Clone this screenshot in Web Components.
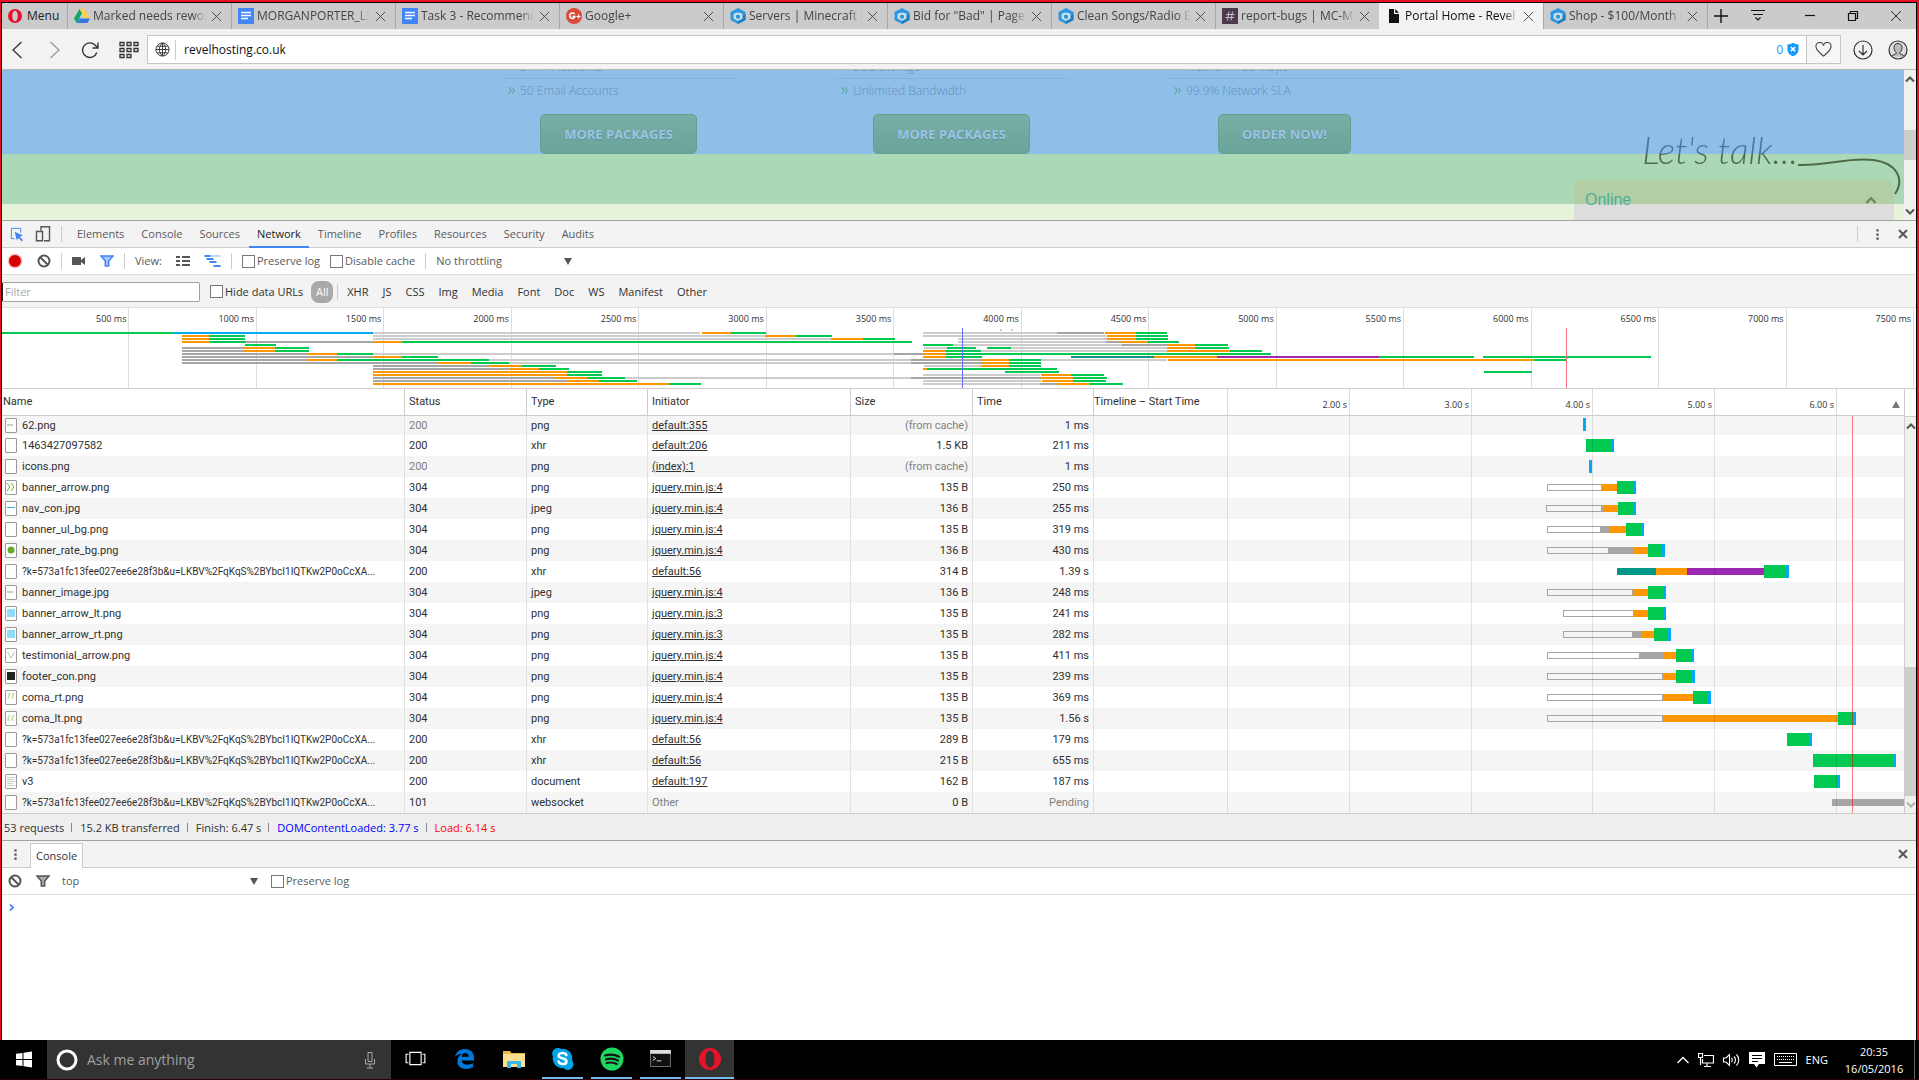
<!DOCTYPE html>
<html lang="en">
<head>
<meta charset="utf-8">
<title>Portal Home - Revel Hosting</title>
<style>
  html, body {
    margin: 0;
    height: 100%;
  }
  body {
    display: flex;
    flex-direction: column;
    overflow: hidden;
    background: #000;
    color: #303030;
    font: 11px/16px "Open Sans", "Noto Sans", sans-serif;
  }
</style>
</head>
<body>
<browser-window>
  <tab-strip>
    <browser-tab icon="drive">Marked needs rework</browser-tab>
    <browser-tab icon="docs">MORGANPORTER_L3_</browser-tab>
    <browser-tab icon="docs">Task 3 - Recommendations</browser-tab>
    <browser-tab icon="gplus">Google+</browser-tab>
    <browser-tab icon="cube">Servers | Minecraft Market</browser-tab>
    <browser-tab icon="cube">Bid for "Bad" | Page 2</browser-tab>
    <browser-tab icon="cube">Clean Songs/Radio Edits</browser-tab>
    <browser-tab icon="slack">report-bugs | MC-Market</browser-tab>
    <browser-tab icon="page" active>Portal Home - Revel Hosting</browser-tab>
    <browser-tab icon="cube">Shop - $100/Month GFX</browser-tab>
  </tab-strip>
  <address-bar></address-bar>
  <page-view>
    <package-card action="MORE PACKAGES"><li>5 FTP Accounts</li><li>50 Email Accounts</li></package-card>
    <package-card action="MORE PACKAGES"><li>2GB Storage</li><li>Unlimited Bandwidth</li></package-card>
    <package-card action="ORDER NOW!"><li>Network 100 Mbps</li><li>99.9% Network SLA</li></package-card>
    <chat-widget slot="chat">Online</chat-widget>
  </page-view>
  <devtools-tabs></devtools-tabs>
  <network-toolbar></network-toolbar>
  <filter-bar></filter-bar>
  <network-overview></network-overview>
  <network-table></network-table>
  <network-summary></network-summary>
  <console-drawer></console-drawer>
</browser-window>
<task-bar></task-bar>

<script>
const ICONS = {
  opera: ['0 0 16 16', '<path fill="#e8112d" fill-rule="evenodd" d="M8 0a8 8 0 1 0 0 16A8 8 0 0 0 8 0zm0 2c2 0 3.100 2.700 3.100 6S10 14 8 14 4.900 11.300 4.900 8 6 2 8 2z"/>'],
  drive: ['0 0 16 16', '<path fill="#ffcf48" d="M5.500 1h5L16 10.500h-5z"/><path fill="#11a861" d="M5.500 1 0 10.500 2.600 15 8 5.500z"/><path fill="#3777e3" d="M5.300 10.500H16L13.400 15H2.600z"/>'],
  docs: ['0 0 16 16', '<path fill="#4285f4" d="M0 0h16v16H0z"/><path stroke="#fff" stroke-width="1.300" d="M3 4.500h10M3 7.500h10M3 10.500h7"/>'],
  gplus: ['0 0 16 16', '<circle cx="8" cy="8" r="8" fill="#db4a39"/><path fill="none" stroke="#fff" stroke-width="1.500" d="M8.500 6A2.700 2.700 0 1 0 9 8.500H6.300"/><path stroke="#fff" stroke-width="1.200" d="M12.500 6.500v4M10.500 8.500h4"/>'],
  cube: ['0 0 16 16', '<path fill="#2f97dd" d="m8 0 7.500 4v8L8 16 .500 12V4z"/><path fill="#1c7fc4" d="m8 16 7.500-4V6L8 10z"/><path fill="#cbe0ee" d="m8 4 4.500 2v4.500L8 13l-4.500-2.500V6z"/><path fill="#2f97dd" d="m8 6.500 2 1v2.300L8 11 6 9.800V7.500zM7.300 2h1.400v3H7.300z"/>'],
  slack: ['0 0 16 16', '<path fill="#4d394b" d="M0 0h16v16H0z"/><path stroke="#c9bcc8" d="m7 3.500-1.500 9M10.500 3.500 9 12.500M4 6.500h8.500M3.500 9.500H12"/>'],
  page: ['0 0 16 16', '<path fill="#111" d="M3 1h5v5h5v9H3zM9.200 1 13 4.800H9.200z"/>'],
  close: ['0 0 12 12', '<path fill="none" stroke="currentColor" d="m1 1 10 10M11 1 1 11"/>'],
  bold_close: ['0 0 12 12', '<path fill="none" stroke="#555" stroke-width="2" d="m2 2 8 8M10 2l-8 8"/>'],
  plus: ['0 0 14 14', '<path stroke="#111" stroke-width="1.400" d="M7 0v14M0 7h14"/>'],
  tabmenu: ['0 0 14 14', '<path fill="none" stroke="#111" stroke-width="1.200" d="M0 1.500h14M2 5.500h10M4.500 8.500 7 11l2.500-2.500"/>'],
  minimise: ['0 0 12 12', '<path stroke="#111" stroke-width="1.200" d="M1 5.500h10"/>'],
  restore: ['0 0 12 12', '<path fill="none" stroke="#111" stroke-width="1.200" d="M1.500 3.500h7v7h-7zM3.500 3V1.500h7v7H9"/>'],
  back: ['0 0 12 18', '<path fill="none" stroke="#333" stroke-width="1.300" d="M10.500 1 2 9l8.500 8"/>'],
  forward: ['0 0 12 18', '<path fill="none" stroke="#999" stroke-width="1.300" d="M1.500 1 10 9l-8.500 8"/>'],
  reload: ['0 0 18 18', '<path fill="none" stroke="#333" stroke-width="1.400" d="M15.800 11.500A7.300 7.300 0 1 1 14 4l3 3M17 1.500V7h-5.500"/>'],
  speeddial: ['0 0 20 18', '<path fill="none" stroke="#333" stroke-width="1.300" d="M1 1.500h4v3H1zM8 1.500h4v3H8zM15 1.500h4v3h-4zM1 7.500h4v3H1zM8 7.500h4v3H8zM15 7.500h4v3h-4zM1 13.500h4v3H1zM8 13.500h4v3H8z"/>'],
  globe: ['0 0 16 16', '<path fill="none" stroke="#333" d="M8 1a7 7 0 1 0 0 14A7 7 0 0 0 8 1zM1 8h14M8 1v14M2.500 4.500h11M2.500 11.500h11M8 1c-4.500 4-4.500 10 0 14 4.500-4 4.500-10 0-14z"/>'],
  shield: ['0 0 14 16', '<path fill="#149bfb" d="M7 0c2 1.500 4.500 2 6.500 2v6c0 4-3 6.500-6.500 8C3.500 14.500.500 12 .500 8V2C2.500 2 5 1.500 7 0z"/><path stroke="#fff" stroke-width="1.800" d="m4.500 5 5 5M9.500 5l-5 5"/>'],
  heart: ['0 0 18 16', '<path fill="none" stroke="#444" stroke-width="1.200" d="M9 15C5 11.500 1 8.500 1 5a4 4 0 0 1 8-1 4 4 0 0 1 8 1c0 3.500-4 6.500-8 10z"/>'],
  download: ['0 0 20 20', '<path fill="none" stroke="#333" stroke-width="1.200" d="M10 1a9 9 0 1 0 0 18 9 9 0 0 0 0-18zM10 5v10M6 11l4 4 4-4"/>'],
  profile: ['0 0 20 20', '<circle cx="10" cy="10" r="9" fill="#ddd" stroke="#333" stroke-width="1.200"/><path fill="#bbb" stroke="#333" d="M4 16.500c0-2 4.500-2 4.500-3.500C6.500 11 6 9 6 7.500 6 5 7.700 3.500 10 3.500s4 1.500 4 4c0 1.500-.500 3.500-2.500 5.500 0 1.500 4.500 1.500 4.500 3.500"/>'],
  arrows: ['0 0 10 10', '<path fill="none" stroke="#3f9f7e" stroke-width="1.200" d="m1 1 3 4-3 4M5 1l3 4-3 4"/>'],
  up: ['0 0 12 10', '<path fill="none" stroke="currentColor" stroke-width="2" d="m2 7.500 4-4 4 4"/>'],
  down: ['0 0 12 10', '<path fill="none" stroke="currentColor" stroke-width="2" d="m2 2.500 4 4 4-4"/>'],
  inspect: ['0 0 16 16', '<path fill="none" stroke="#4285f4" d="M6 12.500H2.500v-11h10V6"/><path fill="#4285f4" d="m6 5 9 4-3.500 1.300L15 14l-1.500 1.300L10 11.700l-1.700 2.500z"/>'],
  device: ['0 0 16 18', '<path fill="none" stroke="#555" stroke-width="1.400" d="M6 5.500V1.700h8.500v14H9M1.500 6.500h6v9.300h-6z"/>'],
  record: ['0 0 16 16', '<circle cx="8" cy="8" r="7.500" fill="#f7c2c2"/><circle cx="8" cy="8" r="6" fill="#d80000"/>'],
  clear: ['0 0 14 14', '<path fill="none" stroke="#555" stroke-width="2" d="M7 1.500a5.500 5.500 0 1 0 0 11 5.500 5.500 0 0 0 0-11zM3 3l8 8"/>'],
  camera: ['0 0 14 10', '<path fill="#555" d="M0 1h9v3l4-3v8L9 6v3H0z"/>'],
  filter_on: ['0 0 14 12', '<path fill="#a9c7fb" stroke="#4285f4" stroke-width="1.500" d="M1 1h12L8.700 6v5H5.300V6z"/>'],
  filter_off: ['0 0 14 12', '<path fill="#aaa" stroke="#555" stroke-width="1.500" d="M1 1h12L8.700 6v5H5.300V6z"/>'],
  list: ['0 0 14 12', '<path stroke="#555" stroke-width="2" d="M0 2h4M6 2h8M0 6h4M6 6h8M0 10h4M6 10h8"/>'],
  waterfall: ['0 0 16 12', '<path stroke="#c3d7fb" stroke-width="2" d="M6 1h10"/><path stroke="#4285f4" stroke-width="2" d="M0 1h6M2 4h7M5 7h7M9 11h7"/>'],
  drop: ['0 0 8 8', '<path fill="#555" d="M0 1h8L4 8z"/>'],
  sort: ['0 0 8 8', '<path fill="#777" d="M0 7h8L4 0z"/>'],
  dots: ['0 0 4 14', '<path fill="#555" d="M.500 0h3v3h-3zM.500 5.500h3v3h-3zM.500 11h3v3h-3z"/>'],
  prompt: ['0 0 6 8', '<path fill="none" stroke="#367cf1" stroke-width="1.700" d="m1 1 3 3-3 3"/>'],
  windows: ['0 0 16 16', '<path fill="#fff" d="m0 2.300 6.500-.900v6.100H0zM7.500 1.200 16 0v7.500H7.500zM0 8.500h6.500v6.100L0 13.700zM7.500 8.500H16V16l-8.500-1.200z"/>'],
  cortana: ['0 0 22 22', '<circle cx="11" cy="11" r="9" fill="none" stroke="#fff" stroke-width="3"/>'],
  mic: ['0 0 12 18', '<path fill="none" stroke="#aaa" d="M4 1.500h4v9H4zM1.500 8v5h9V8M6 13v4M3 17h6"/>'],
  taskview: ['0 0 22 16', '<path fill="none" stroke="#fff" stroke-width="1.200" d="M5 1.500h12v13H5zM3.500 3.500H1v9h2.500M18.500 3.500H21v9h-2.500"/>'],
  edge: ['0 0 22 22', '<path fill="#0078d7" d="M1 9.500C2 4 6 1 11.500 1 17.500 1 21 5 21 10.500V13H8c.300 3 3 4.500 6 4.500 2.300 0 4.500-.700 6-1.700V20c-2 1.200-4.500 2-7.500 2C6.500 22 3.500 18.500 3.500 14c0-3.500 2-6.500 5-8C5 6 2.500 7.500 1 9.500zM8 9.200h7.500c0-2.500-1.500-3.900-3.700-3.900C9.600 5.300 8.300 7 8 9.200z"/>'],
  explorer: ['0 0 22 20', '<path fill="#e8b84a" d="M0 2h7l1.500 2H22v14H0z"/><path fill="#fbe08d" d="M0 5h22v13H0z"/><path fill="#39b8ea" d="M4 19v-7h14v7h-4v-4H8v4z"/>'],
  skype: ['0 0 24 24', '<path fill="#00a3e4" d="M7 1a6 6 0 0 1 4 1 10 10 0 0 1 11 12 6 6 0 0 1-9 8A10 10 0 0 1 2 10 6 6 0 0 1 7 1z"/><path fill="none" stroke="#fff" stroke-width="2.600" stroke-linecap="round" d="M16 8.500C15 5.700 8 5.500 8 9c0 3.500 8.200 2 8.200 6 0 3.700-7.200 3.700-8.400 0"/>'],
  spotify: ['0 0 24 24', '<circle cx="12" cy="12" r="11.500" fill="#1ed760"/><path fill="none" stroke="#111" stroke-width="2.200" stroke-linecap="round" d="M5 8.500c5-1.500 10-1 14 1.200M6 12.400c4.300-1.200 8.500-.700 12 1.200M6.700 16c3.500-.900 7-.500 10 1"/>'],
  cmd: ['0 0 22 18', '<path fill="#111" stroke="#777" d="M.500.500h21v17H.500z"/><path fill="#ddd" d="M0 0h22v4H0z"/><path fill="none" stroke="#ddd" d="m3 7 3 2-3 2M7 11.500h5"/>'],
  opera_big: ['0 0 24 24', '<path fill="#e5132b" fill-rule="evenodd" d="M12 1a11 11 0 1 0 0 22 11 11 0 0 0 0-22zm0 2.500c2.800 0 4.500 3.700 4.500 8.500s-1.700 8.500-4.500 8.500S7.500 16.800 7.500 12 9.200 3.500 12 3.500z"/>'],
  chevron: ['0 0 12 8', '<path fill="none" stroke="#fff" stroke-width="1.400" d="m.500 7 5.500-5.500L11.500 7"/>'],
  network: ['0 0 16 14', '<path fill="none" stroke="#fff" stroke-width="1.200" d="M6 2.500h9.500V10H4.500V6M9 10v3M6 13.500h7M.500.500h4v4h-4zM2.500 5v7"/>'],
  sound: ['0 0 17 14', '<path fill="none" stroke="#fff" stroke-width="1.100" d="M.500 5v4H3l3.500 3.500v-11L3 5zM8.500 5c1 1 1 3 0 4M11 3.500c2 2 2 5 0 7M13.500 1.500c3 3 3 8 0 11"/>'],
  notes: ['0 0 16 16', '<path fill="#fff" d="M0 0h16v12h-6l-2.500 3.500L5 12H0z"/><path stroke="#000" d="M3 3.500h10M3 6.500h10M3 9.500h6"/>'],
  keyboard: ['0 0 23 13', '<path fill="none" stroke="#fff" d="M.500.500h22v12H.500z"/><path stroke="#fff" stroke-dasharray="1 1" d="M3 3.500h17M3 6.500h17"/><path stroke="#fff" d="M5 9.500h13"/>']
};

function icon(name, width, height) {
  const [box, shape] = ICONS[name];
  return `<svg class="icon" width="${width}" height="${height || width}" viewBox="${box}" aria-hidden="true">${shape}</svg>`;
}

const BASE = `
  :host, * { box-sizing: border-box; }
  .icon { display: block; flex: none; }
  button { display: flex; align-items: center; justify-content: center; padding: 0; border: 0; background: none; color: inherit; font: inherit; }
  label { display: flex; align-items: center; gap: 2px; }
  input[type=checkbox] { appearance: none; width: 13px; height: 13px; margin: 0; border: 1px solid #777; background: #fff; }
  .sep { width: 1px; height: 16px; background: #ccc; flex: none; }
  .pick { display: grid; align-items: center; }
  .pick select { grid-area: 1 / 1; width: 100%; padding: 0; border: 0; appearance: none; background: none; color: inherit; font: inherit; }
  .pick .icon { grid-area: 1 / 1; justify-self: end; pointer-events: none; }
`;

class UiElement extends HTMLElement {
  constructor() {
    super();
    this.attachShadow({ mode: 'open' });
  }

  connectedCallback() {
    this.shadowRoot.innerHTML = `<style>${BASE}${this.styles()}</style>${this.markup()}`;
  }
}

class BrowserWindow extends UiElement {
  styles() {
    return `
      :host { display: flex; flex: 1; min-height: 0; border: solid #e81123; border-width: 2px 2px 0 1px; }
      .frame { flex: 1; min-width: 0; display: flex; flex-direction: column; border: solid #000; border-width: 1px 1px 0; background: #fff; overflow: hidden; }
    `;
  }
  markup() {
    return '<div class="frame"><slot></slot></div>';
  }
}

class TabStrip extends UiElement {
  styles() {
    return `
      :host { display: flex; height: 26px; flex: none; background: #cbcbcb; }
      .menu { justify-content: flex-start; width: 65px; padding-left: 6px; gap: 5px; font-size: 12px; color: #222; }
      .tabs { display: flex; flex: 0 1 1641px; min-width: 0; border-right: 1px solid #a8a8a8; }
      .controls { flex: 1; display: flex; align-items: center; justify-content: space-between; padding: 0 12px 0 5px; }
      .controls button { width: 16px; height: 20px; }
      .controls .new { margin-right: -6px; }
      .controls .list { margin-right: 8px; }
    `;
  }
  markup() {
    return `
      <button class="menu">${icon('opera', 14, 16)}Menu</button>
      <div class="tabs"><slot></slot></div>
      <div class="controls">
        <button class="new" aria-label="New tab">${icon('plus', 14)}</button>
        <button class="list" aria-label="Tab menu">${icon('tabmenu', 14)}</button>
        <button aria-label="Minimise">${icon('minimise', 12)}</button>
        <button aria-label="Restore">${icon('restore', 12)}</button>
        <button aria-label="Close window">${icon('close', 12)}</button>
      </div>
    `;
  }
}

class BrowserTab extends UiElement {
  styles() {
    return `
      :host { display: flex; flex: 1 1 0; min-width: 0; align-items: center; padding: 0 9px 0 6px; border-left: 1px solid #a8a8a8; color: #444; font-size: 12px; }
      :host([active]) { background: #f2f2f2; border-color: #f2f2f2; color: #111; }
      .title { flex: 1; min-width: 0; margin: 0 4px 0 3px; overflow: hidden; white-space: nowrap; mask-image: linear-gradient(90deg, #000 88%, transparent); }
      button { width: 12px; height: 16px; color: #444; }
    `;
  }
  markup() {
    return `${icon(this.getAttribute('icon'), 16)}<span class="title"><slot></slot></span><button aria-label="Close tab">${icon('close', 11)}</button>`;
  }
}

class AddressBar extends UiElement {
  styles() {
    return `
      :host { display: flex; align-items: center; height: 41px; flex: none; padding: 1px 8px 0 9px; background: #f2f2f2; border-bottom: 1px solid #b8b8b8; }
      .nav { display: flex; align-items: center; gap: 20px; width: 136px; }
      .nav button:nth-child(2) { margin-left: 6px; }
      .box { flex: 1; display: flex; align-items: center; height: 29px; border: 1px solid #c6c6c6; background: #fff; padding-left: 7px; }
      .box .sep { height: 20px; margin: 0 8px 0 5px; }
      input { flex: 1; border: 0; padding: 0; outline: 0; background: none; font: 12px/20px "Open Sans", sans-serif; color: #111; }
      .blocked { gap: 4px; margin-right: 7px; color: #149bfb; font-size: 12px; }
      .fav { width: 34px; height: 27px; border-left: 1px solid #c6c6c6; background: #f5f6f8; }
      .end { display: flex; gap: 15px; margin-left: 12px; }
    `;
  }
  markup() {
    return `
      <div class="nav">
        <button aria-label="Back">${icon('back', 12, 18)}</button>
        <button aria-label="Forward">${icon('forward', 12, 18)}</button>
        <button aria-label="Reload">${icon('reload', 18)}</button>
        <button aria-label="Speed dial">${icon('speeddial', 20, 18)}</button>
      </div>
      <div class="box">
        ${icon('globe', 15)}<span class="sep"></span>
        <input type="text" aria-label="Address" value="revelhosting.co.uk">
        <button class="blocked">0${icon('shield', 12, 15)}</button>
        <button class="fav" aria-label="Bookmark">${icon('heart', 17, 15)}</button>
      </div>
      <div class="end">
        <button aria-label="Downloads">${icon('download', 20)}</button>
        <button aria-label="Profile">${icon('profile', 20)}</button>
      </div>
    `;
  }
}

class ScrollBar extends UiElement {
  styles() {
    const [before, size, after] = this.getAttribute('parts').split(' ');
    return `
      :host { display: flex; flex-direction: column; width: 12px; background: #f0f0f0; color: #555; }
      button { height: 17px; flex: none; }
      i { flex: ${before} 0 0; }
      i.thumb { flex-grow: ${size}; background: #cdcdcd; }
      i.rest { flex-grow: ${after}; }
      :host([at-end]) button:last-child { color: #b0b0b0; }
    `;
  }
  markup() {
    return `<button aria-label="Scroll up">${icon('up', 12, 10)}</button><i></i><i class="thumb"></i><i class="rest"></i><button aria-label="Scroll down">${icon('down', 12, 10)}</button>`;
  }
}

class PageView extends UiElement {
  styles() {
    return `
      :host { display: flex; height: 151px; flex: none; border-bottom: 1px solid #a3a3a3; }
      .page { position: relative; flex: 1; overflow: hidden; }
      .content { display: flex; justify-content: center; align-items: flex-end; gap: 100px; height: 84px; padding-right: 3px; background: #8fbfe8; overflow: hidden; }
      .padding { height: 50px; background: #abd8b7; }
      .margin { height: 16px; background: #e6f3d8; }
      slot[name=chat]::slotted(*) { position: absolute; right: 2px; bottom: 0; }
    `;
  }
  markup() {
    return `
      <div class="page">
        <div class="content"><slot></slot></div>
        <div class="padding"></div>
        <div class="margin"></div>
        <slot name="chat"></slot>
      </div>
      <scroll-bar parts="43 30 43"></scroll-bar>
    `;
  }
}

class PackageCard extends UiElement {
  styles() {
    return `
      :host { display: flex; flex-direction: column; align-items: center; width: 233px; }
      ul { align-self: stretch; margin: 0 0 11px; padding: 0; list-style: none; }
      li { display: flex; align-items: center; gap: 4px; padding-left: 6px; border-bottom: 1px solid #84b3de; color: #6090bc; font: 300 12px/23px "Open Sans", sans-serif; }
      li:last-child { border-color: transparent; }
      button { height: 40px; padding: 0 23px; border: 1px solid #61a18f; border-radius: 5px; background: linear-gradient(#78aea6, #6aa49b); color: #9cc3e6; font: 700 13px/20px "Open Sans", sans-serif; text-shadow: 0 1px 1px #5b928a; }
    `;
  }
  markup() {
    const items = [...this.children].map(li => `<li>${icon('arrows', 8, 9)}${li.textContent}</li>`).join('');
    return `<ul>${items}</ul><button>${this.getAttribute('action')}</button>`;
  }
}

class ChatWidget extends UiElement {
  styles() {
    return `
      :host { display: grid; grid-template-columns: auto 104px; width: 328px; }
      .talk { justify-self: end; height: 44px; font: italic 300 37px/44px Lato, cursive; color: transparent; background: linear-gradient(#4a73a0 26px, #4f6b45 26px); background-clip: text; }
      .swoosh { grid-area: 1 / 2 / 3 / 3; margin-top: 28px; }
      .panel { grid-area: 2 / 1 / 3 / 3; display: flex; align-items: center; justify-content: space-between; width: 320px; height: 40px; margin-top: 8px; padding: 0 16px 0 11px; border-radius: 8px 8px 0 0; background: linear-gradient(#b3cfa6 24px, #ddd 24px); color: #4dae9b; font: 16px/20px "Liberation Sans", Arial, sans-serif; }
      .panel .icon { color: #6f8a63; }
    `;
  }
  markup() {
    return `
      <span class="talk">Let's talk...</span>
      <svg class="swoosh" width="104" height="42" viewBox="0 0 104 42" aria-hidden="true"><path fill="none" stroke="#4f6b45" stroke-width="2" d="M0 9c30 1 50-8 75-5 24 3 32 19 22 34"/></svg>
      <button class="panel"><slot></slot>${icon('up', 14, 12)}</button>
    `;
  }
}

class DevtoolsTabs extends UiElement {
  styles() {
    return `
      :host { display: flex; align-items: center; height: 27px; flex: none; padding: 0 7px; background: #f3f3f3; border-bottom: 1px solid #ccc; color: #5a5a5a; }
      .tools { display: flex; align-items: center; gap: 11px; width: 52px; }
      nav { flex: 1; display: flex; align-self: stretch; gap: 1px; margin: 0 7px -1px; }
      nav button { padding: 0 8px; border-bottom: 2px solid transparent; }
      nav button[aria-current] { border-color: #4285f4; color: #222; }
      .end { display: flex; align-items: center; gap: 18px; }
    `;
  }
  markup() {
    const names = ['Elements', 'Console', 'Sources', 'Network', 'Timeline', 'Profiles', 'Resources', 'Security', 'Audits'];
    return `
      <div class="tools">
        <button aria-label="Inspect">${icon('inspect', 15)}</button>
        <button aria-label="Device mode">${icon('device', 16, 18)}</button>
      </div>
      <span class="sep"></span>
      <nav>${names.map(n => `<button${n === 'Network' ? ' aria-current="page"' : ''}>${n}</button>`).join('')}</nav>
      <div class="end">
        <span class="sep"></span>
        <button aria-label="More">${icon('dots', 3, 13)}</button>
        <button aria-label="Close tools">${icon('bold_close', 12)}</button>
      </div>
    `;
  }
}

class NetworkToolbar extends UiElement {
  styles() {
    return `
      :host { display: flex; align-items: center; height: 27px; flex: none; padding-left: 5px; gap: 10px; border-bottom: 1px solid #ddd; color: #5a5a5a; }
      .group { display: flex; align-items: center; gap: 14px; }
      .first { width: 44px; }
      .pick { width: 136px; }
    `;
  }
  markup() {
    return `
      <div class="group first">
        <button aria-label="Record">${icon('record', 16)}</button>
        <button aria-label="Clear">${icon('clear', 14)}</button>
      </div>
      <span class="sep"></span>
      <div class="group">
        <button aria-label="Capture screenshots">${icon('camera', 14, 10)}</button>
        <button aria-label="Filter">${icon('filter_on', 14, 12)}</button>
      </div>
      <span class="sep"></span>
      <div class="group">
        <span>View:</span>
        <button aria-label="Large rows">${icon('list', 14, 12)}</button>
        <button aria-label="Overview">${icon('waterfall', 17, 12)}</button>
      </div>
      <span class="sep"></span>
      <label><input type="checkbox">Preserve log</label>
      <label><input type="checkbox">Disable cache</label>
      <span class="sep"></span>
      <div class="pick"><select aria-label="Throttling"><option>No throttling</option></select>${icon('drop', 8)}</div>
    `;
  }
}

class FilterBar extends UiElement {
  styles() {
    return `
      :host { display: flex; align-items: center; height: 33px; flex: none; padding-top: 1px; background: #f3f3f3; border-bottom: 1px solid #ddd; }
      input[type=text] { width: 198px; height: 20px; margin-right: 10px; padding: 0 2px; border: 1px solid #a3a3a3; border-left-color: #222; border-radius: 2px; font: inherit; }
      input::placeholder { color: #a9a9a9; }
      .types { display: flex; align-items: center; }
      .types button { height: 22px; padding: 0 7px; }
      .types .on { width: 22px; margin: 0 4px 0 8px; padding: 0; border-radius: 8px; background: #a9a9a9; color: #fff; }
      .types .sep { margin-right: 2px; }
    `;
  }
  markup() {
    const types = ['XHR', 'JS', 'CSS', 'Img', 'Media', 'Font', 'Doc', 'WS', 'Manifest', 'Other'];
    return `
      <input type="text" placeholder="Filter" aria-label="Filter">
      <label><input type="checkbox">Hide data URLs</label>
      <div class="types"><button class="on">All</button><span class="sep"></span>${types.map(t => `<button>${t}</button>`).join('')}</div>
    `;
  }
}

const COLORS = { G: '#02c952', O: '#ff9800', B: '#03a9f4', P: '#9c27b0', T: '#009688', g: '#ccc', d: '#a6a6a6' };

// One string per lane: phase, start, end
const LANES = [
  'G 0 172,B 172 371,g 371 698,O 700 729,G 729 764,g 921 1055,d 1055 1102,O 1103 1134,G 1134 1165',
  'O 180 207,G 207 243,g 371 763,O 763 794,G 794 830,g 921 1104,O 1105 1134,G 1134 1166',
  'O 180 207,G 207 243,g 371 829,O 829 861,G 861 893,g 956 1105,O 1105 1134,G 1134 1166',
  'O 180 208,G 208 244,d 244 371,O 371 400,G 400 910,g 956 1104,d 1104 1120,O 1120 1146,G 1146 1177',
  'G 243 274,G 921 951,g 951 1120,d 1120 1166,O 1166 1193,G 1193 1226',
  'd 180 242,O 242 273,G 273 307,g 922 945,G 945 974,G 985 1009,g 1009 1165,O 1165 1193,G 1193 1227',
  'd 180 242,O 242 273,G 273 307,O 921 944,G 944 979,g 979 1165,O 1165 1228,G 1228 1260',
  'd 180 306,O 306 335,G 335 371,g 371 892,d 892 921,O 921 944,G 944 1269',
  'd 180 371,O 371 400,G 400 436,O 921 944,G 944 980,T 1069 1152,O 1152 1215,P 1215 1377,G 1377 1472,G 1481 1649',
  'd 180 306,O 306 335,G 335 487,g 487 909,d 909 980,O 980 1007,G 1007 1039,g 1039 1165,O 1166 1532,G 1532 1564',
  'd 180 436,O 436 469,G 469 507,g 507 909,d 909 979,O 979 1007,G 1007 1039',
  'd 371 487,O 487 520,G 520 554,g 922 979,O 979 1007,G 1007 1039',
  'd 371 507,O 507 537,G 537 567,O 921 925,G 925 1055',
  'O 371 565,G 565 600,G 1003 1057,G 1482 1530',
  'O 371 565,G 565 600,g 921 1038,O 1039 1069,G 1069 1102',
  'd 371 554,O 554 585,G 585 623,g 623 909,d 909 1040,O 1040 1071,G 1071 1105',
  'd 371 566,O 566 597,G 597 635,g 921 1039,O 1040 1071,G 1071 1104',
  'O 371 667,G 667 699,g 921 1038,d 1038 1055,O 1055 1088,G 1088 1121'
];

function parseBars(text) {
  return text.split(',').map(part => {
    const [kind, from, to] = part.split(' ');
    return { kind, from: Number(from), to: Number(to) };
  });
}

class NetworkOverview extends UiElement {
  styles() {
    return `
      :host { display: grid; height: 81px; flex: none; border-bottom: 1px solid #ccc; }
      .scale, svg { grid-area: 1 / 1; width: 100%; height: 80px; display: block; }
      .scale { display: flex; padding-right: 2px; }
      .scale span { flex: 1; padding: 3px 2px 0 0; border-right: 1px solid #ddd; text-align: right; font-size: 9px; }
    `;
  }
  markup() {
    const labels = Array.from({ length: 15 }, (_, i) => `<span>${(i + 1) * 500} ms</span>`).join('');
    const bars = LANES.map((lane, row) => parseBars(lane).map(b =>
      `<rect x="${b.from}" y="${24 + row * 3}" width="${b.to - b.from}" height="2" fill="${COLORS[b.kind]}"/>`
    ).join('')).join('');
    return `
      <div class="scale">${labels}</div>
      <svg viewBox="0 0 1914 80" preserveAspectRatio="none" aria-hidden="true">
        ${bars}
        <path fill="#ccc" d="M998 21h2v2h-2zM1009 21h2v2h-2z"/>
        <path fill="#6a6af5" d="M960 20h1v60h-1z"/>
        <path fill="#f5707a" d="M1564 20h1v60h-1z"/>
      </svg>
    `;
  }
}

const LONG = '?k=573a1fc13fee027ee6e28f3b&amp;u=LKBV%2FqKqS%2BYbcI1IQTKw2P0oCcXA...';

// name, status, type, initiator, size, time, bars, thumbnail; W marks the queueing outline
const REQUESTS = [
  ['62.png', 200, 'png', 'default:355', '(from cache)', '1 ms', 'B 489 492', 'dash'],
  ['1463427097582', 200, 'xhr', 'default:206', '1.5 KB', '211 ms', 'G 492 517,B 517 520', ''],
  ['icons.png', 200, 'png', '(index):1', '(from cache)', '1 ms', 'B 495 498', ''],
  ['banner_arrow.png', 304, 'png', 'jquery.min.js:4', '135 B', '250 ms', 'W 453 508,O 508 523,G 523 539,B 539 542', 'arrows'],
  ['nav_con.jpg', 304, 'jpeg', 'jquery.min.js:4', '136 B', '255 ms', 'W 452 508,d 508 509,O 509 524,G 524 539,B 539 542', 'line'],
  ['banner_ul_bg.png', 304, 'png', 'jquery.min.js:4', '135 B', '319 ms', 'W 453 507,d 507 516,O 516 532,G 532 547,B 547 550', ''],
  ['banner_rate_bg.png', 304, 'png', 'jquery.min.js:4', '136 B', '430 ms', 'W 453 515,d 515 539,O 539 554,G 554 568,B 568 571', 'dot'],
  [LONG, 200, 'xhr', 'default:56', '314 B', '1.39 s', 'T 523 562,O 562 593,P 593 670,G 670 692,B 692 695', ''],
  ['banner_image.jpg', 304, 'jpeg', 'jquery.min.js:4', '136 B', '248 ms', 'W 453 539,d 539 540,O 540 554,G 554 569,B 569 572', 'dash'],
  ['banner_arrow_lt.png', 304, 'png', 'jquery.min.js:3', '135 B', '241 ms', 'W 469 540,O 540 554,G 554 569,B 569 572', 'sky'],
  ['banner_arrow_rt.png', 304, 'png', 'jquery.min.js:3', '135 B', '282 ms', 'W 469 539,d 539 547,O 547 560,G 560 574,B 574 577', 'sky'],
  ['testimonial_arrow.png', 304, 'png', 'jquery.min.js:4', '135 B', '411 ms', 'W 453 546,d 546 569,O 569 582,G 582 597,B 597 600', 'vee'],
  ['footer_con.png', 304, 'png', 'jquery.min.js:4', '135 B', '239 ms', 'W 453 569,O 569 582,G 582 598,B 598 601', 'dark'],
  ['coma_rt.png', 304, 'png', 'jquery.min.js:4', '135 B', '369 ms', 'W 453 569,O 569 599,G 599 614,B 614 617', 'quoter'],
  ['coma_lt.png', 304, 'png', 'jquery.min.js:4', '135 B', '1.56 s', 'W 453 569,O 569 744,G 744 759,B 759 762', 'quotel'],
  [LONG, 200, 'xhr', 'default:56', '289 B', '179 ms', 'G 693 715,B 715 718', ''],
  [LONG, 200, 'xhr', 'default:56', '215 B', '655 ms', 'G 719 799,B 799 802', ''],
  ['v3', 200, 'document', 'default:197', '162 B', '187 ms', 'G 720 743,B 743 746', 'text'],
  [LONG, 101, 'websocket', 'Other', '0 B', 'Pending', 'd 738 810', '']
];

const THUMBS = {
  dash: '<path fill="#ccc" d="M2 6h6v2H2z"/>',
  arrows: '<path fill="none" stroke="#6fae2b" d="m2 3 3 4-3 4M6 3l3 4-3 4"/>',
  line: '<path fill="#35b0e0" d="M2 6h8v1H2z"/>',
  dot: '<circle cx="6" cy="7" r="3.500" fill="#68a82a"/>',
  sky: '<path fill="#8fdcfb" d="M2 3h8v8H2z"/>',
  vee: '<path fill="none" stroke="#bbb" d="m2.500 4 3.500 6 3.500-6"/>',
  dark: '<path fill="#222" d="M2 3h8v8H2z"/>',
  quoter: '<path fill="none" stroke="#bfdca0" stroke-width="1.500" d="M3 4h1.500c0 3-.500 4-2 5M7 4h1.500c0 3-.500 4-2 5"/>',
  quotel: '<path fill="none" stroke="#bfdca0" stroke-width="1.500" d="M5 4C3.500 5 3 6 3 9h1.500M9 4C7.500 5 7 6 7 9h1.500"/>',
  text: '<path stroke="#ccc" d="M2 3.500h8M2 5.500h7M2 7.500h8M2 9.500h6M2 11.500h8"/>'
};

class NetworkTable extends UiElement {
  styles() {
    return `
      :host { display: flex; flex: none; border-bottom: 1px solid #ccc; font-family: Roboto, sans-serif; }
      table { flex: 1; width: 100%; table-layout: fixed; border-collapse: separate; border-spacing: 0; }
      th, td { padding: 0 5px 0 4px; text-align: left; font-weight: 400; white-space: nowrap; overflow: hidden; }
      th { height: 27px; border-right: 1px solid #ccc; border-bottom: 1px solid #ccc; }
      th:first-child { padding-left: 1px; }
      td { height: 21px; line-height: 21px; border-right: 1px solid #e1e1e1; }
      td:first-child { padding-right: 0; }
      tbody tr:first-child td { height: 19px; line-height: 19px; }
      tbody tr:nth-child(odd) { background: #f5f5f5; }
      th:last-child, td:last-child { padding: 0; border-right: 0; }
      td.num { padding-right: 4px; text-align: right; }
      .dim { color: #808080; }
      a { color: inherit; }
      .file { display: flex; align-items: center; gap: 5px; margin-left: -1px; }
      .file.long { font-size: 10px; }
      .thumb { flex: none; width: 12px; height: 15px; background: #fff; border: 1px solid #999; border-radius: 1px; }
      .bars { display: block; width: 100%; }
      .scale { display: grid; grid-template-columns: 134fr 122fr 122fr 121fr 122fr 122fr 67fr; height: 26px; line-height: 26px; }
      .scale span { border-right: 1px solid #ddd; padding-right: 2px; text-align: right; font: 9px/32px "Open Sans", sans-serif; }
      .scale span:first-child { text-align: left; font: inherit; }
      .scale .icon { align-self: center; justify-self: end; margin-right: 4px; }
      .side { display: flex; flex-direction: column; border-left: 1px solid #ccc; }
      .side::before { content: ""; height: 27px; border-bottom: 1px solid #ccc; }
      scroll-bar { flex: 1; width: 11px; }
    `;
  }
  bars(text, first) {
    const top = first ? 2 : 0;
    const shapes = parseBars(text).map(b => {
      if (b.kind === 'W') {
        return `<path fill="#a6a6a6" fill-rule="evenodd" d="M${b.from} 7H${b.to}v7H${b.from}zM${b.from + 1} 8v5H${b.to - 1}V8z"/>`;
      }
      const tall = 'GB'.includes(b.kind);
      return `<rect x="${b.from}" y="${tall ? 4 : 7}" width="${b.to - b.from}" height="${tall ? 13 : 7}" fill="${COLORS[b.kind]}"/>`;
    }).join('');
    const grid = [133, 255, 377, 498, 620, 742].map(x => `M${x} 0h1v21h-1z`).join('');
    return `<svg class="bars" height="${21 - top}" viewBox="0 ${top} 810 ${21 - top}" preserveAspectRatio="none" aria-hidden="true">${shapes}<path fill="#000" fill-opacity=".1" d="${grid}"/><path fill="#f00" fill-opacity=".5" d="M758 0h1v21h-1z"/></svg>`;
  }
  row([name, status, type, initiator, size, time, bars, thumb], index) {
    const cached = size === '(from cache)';
    const from = initiator === 'Other' ? '<span class="dim">Other</span>' : `<a href="#">${initiator}</a>`;
    return `
      <tr>
        <td><span class="file ${name === LONG ? 'long' : ''}"><svg class="thumb" viewBox="1 1 10 13" aria-hidden="true">${THUMBS[thumb] || ''}</svg>${name}</span></td>
        <td class="${cached ? 'dim' : ''}">${status}</td>
        <td>${type}</td>
        <td>${from}</td>
        <td class="num ${cached ? 'dim' : ''}">${size}</td>
        <td class="num ${time === 'Pending' ? 'dim' : ''}">${time}</td>
        <td>${this.bars(bars, index === 0)}</td>
      </tr>`;
  }
  markup() {
    const widths = [403, 122, 121, 203, 122, 121];
    const seconds = ['2.00 s', '3.00 s', '4.00 s', '5.00 s', '6.00 s'];
    return `
      <table>
        <colgroup>${widths.map(w => `<col style="width:${w}px">`).join('')}<col></colgroup>
        <thead><tr>
          <th>Name</th><th>Status</th><th>Type</th><th>Initiator</th><th>Size</th><th>Time</th>
          <th><div class="scale"><span>Timeline – Start Time</span>${seconds.map(s => `<span>${s}</span>`).join('')}${icon('sort', 8)}</div></th>
        </tr></thead>
        <tbody>${REQUESTS.map((r, i) => this.row(r, i)).join('')}</tbody>
      </table>
      <div class="side"><scroll-bar parts="234 129 0" at-end></scroll-bar></div>
    `;
  }
}

class NetworkSummary extends UiElement {
  styles() {
    return `
      :host { display: flex; align-items: center; gap: 7px; height: 27px; flex: none; padding: 1px 0 0 2px; background: #eee; border-bottom: 1px solid #a3a3a3; }
      .sep { height: 9px; margin-right: 1px; background: #888; }
      .dom { color: #00f; }
      .load { color: #f00; }
    `;
  }
  markup() {
    return `
      <span>53 requests</span><i class="sep"></i>
      <span>15.2 KB transferred</span><i class="sep"></i>
      <span>Finish: 6.47 s</span><i class="sep"></i>
      <span class="dom">DOMContentLoaded: 3.77 s</span><i class="sep"></i>
      <span class="load">Load: 6.14 s</span>
    `;
  }
}

class ConsoleDrawer extends UiElement {
  styles() {
    return `
      :host { display: flex; flex-direction: column; flex: 1; min-height: 0; color: #5a5a5a; }
      .tabs { display: flex; align-items: center; height: 27px; padding: 0 7px 0 12px; background: #f3f3f3; border-bottom: 1px solid #ccc; }
      .tab { align-self: flex-end; height: 25px; margin: 0 auto -1px 13px; padding: 0 5px; border: 1px solid #ccc; border-bottom: 0; background: #fff; color: #333; }
      .bar { display: flex; align-items: center; height: 27px; padding-left: 6px; border-bottom: 1px solid #ddd; }
      .bar button { margin-right: 14px; }
      .pick { width: 196px; margin: 0 13px 0 -2px; }
      .prompt { display: flex; flex: 1; align-items: flex-start; padding: 4px 7px; gap: 6px; }
      .prompt .icon { margin-top: 4px; }
      .prompt input { flex: 1; height: 16px; padding: 0; border: 0; outline: 0; font: inherit; }
    `;
  }
  markup() {
    return `
      <div class="tabs">
        <button aria-label="Drawer menu">${icon('dots', 3, 13)}</button>
        <button class="tab">Console</button>
        <button aria-label="Close drawer">${icon('bold_close', 12)}</button>
      </div>
      <div class="bar">
        <button aria-label="Clear console">${icon('clear', 14)}</button>
        <button aria-label="Filter messages">${icon('filter_off', 14, 12)}</button>
        <div class="pick"><select aria-label="Context"><option>top</option></select>${icon('drop', 8)}</div>
        <label><input type="checkbox">Preserve log</label>
      </div>
      <div class="prompt">${icon('prompt', 6, 9)}<input type="text" aria-label="Console prompt"></div>
    `;
  }
}

class TaskBar extends UiElement {
  styles() {
    return `
      :host { display: flex; height: 40px; flex: none; background: #000; color: #fff; border-bottom: 1px solid #2a0006; font-size: 11px; }
      .start { width: 47px; }
      .search { display: flex; align-items: center; gap: 9px; width: 344px; padding: 0 15px 0 9px; background: #333; }
      .search input { flex: 1; min-width: 0; padding: 0; border: 0; outline: 0; background: none; font: 14px/20px "Open Sans", sans-serif; }
      .search input::placeholder { color: #a0a0a0; }
      .apps { flex: 1; display: flex; }
      .apps button { width: 49px; border-bottom: 2px solid transparent; }
      .apps .open { width: 41px; margin: 0 4px; border-color: #76b9ed; }
      .apps .current { width: 49px; margin: 0; background: #333; border-color: #76b9ed; }
      .tray { display: flex; align-items: center; gap: 9px; }
      .clock { width: 70px; margin: 0 5px 0 2px; text-align: center; line-height: 17px; }
      .desk { width: 5px; border-left: 1px solid #666; }
    `;
  }
  markup() {
    return `
      <button class="start" aria-label="Start">${icon('windows', 16, 17)}</button>
      <div class="search">${icon('cortana', 22)}<input type="text" placeholder="Ask me anything" aria-label="Search">${icon('mic', 12, 18)}</div>
      <div class="apps">
        <button aria-label="Task view">${icon('taskview', 21, 15)}</button>
        <button aria-label="Edge">${icon('edge', 21)}</button>
        <button aria-label="Explorer">${icon('explorer', 22, 20)}</button>
        <button class="open" aria-label="Skype">${icon('skype', 23)}</button>
        <button class="open" aria-label="Spotify">${icon('spotify', 24)}</button>
        <button class="open" aria-label="Command prompt">${icon('cmd', 21, 17)}</button>
        <button class="current" aria-label="Opera">${icon('opera_big', 24)}</button>
      </div>
      <div class="tray">
        <button aria-label="Hidden icons">${icon('chevron', 12, 8)}</button>
        ${icon('network', 16, 14)}${icon('sound', 17, 14)}${icon('notes', 16)}${icon('keyboard', 23, 13)}
        <span>ENG</span>
        <div class="clock"><div>20:35</div><div>16/05/2016</div></div>
      </div>
      <div class="desk"></div>
    `;
  }
}

customElements.define('browser-window', BrowserWindow);
customElements.define('tab-strip', TabStrip);
customElements.define('browser-tab', BrowserTab);
customElements.define('address-bar', AddressBar);
customElements.define('scroll-bar', ScrollBar);
customElements.define('page-view', PageView);
customElements.define('package-card', PackageCard);
customElements.define('chat-widget', ChatWidget);
customElements.define('devtools-tabs', DevtoolsTabs);
customElements.define('network-toolbar', NetworkToolbar);
customElements.define('filter-bar', FilterBar);
customElements.define('network-overview', NetworkOverview);
customElements.define('network-table', NetworkTable);
customElements.define('network-summary', NetworkSummary);
customElements.define('console-drawer', ConsoleDrawer);
customElements.define('task-bar', TaskBar);
</script>
</body>
</html>
